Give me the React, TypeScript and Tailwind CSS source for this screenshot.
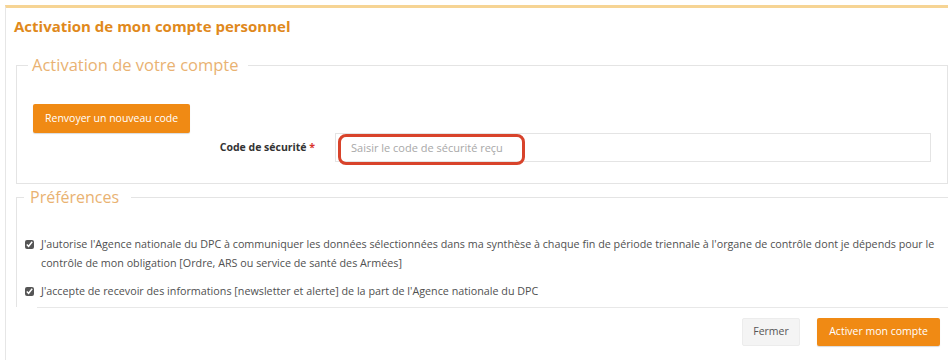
export default function App() {
  return (
    <div className="relative h-[360px] w-[948px] overflow-hidden bg-white pl-[5px] pt-[5px] font-['Open_Sans',sans-serif]">
      <div className="flex h-full flex-col border-l border-t-[3px] border-l-[#e6e6e6] border-t-[#f6d494]">
        <h1 className="pl-[8px] pt-[8px] text-[15px] font-bold leading-[20px] text-[#e0891c]">
          Activation de mon compte personnel
        </h1>

        <fieldset className="ml-[10px] mr-[3px] mt-[19px] h-[129px] border border-[#e4e4e4] px-[16px]">
          <legend className="ml-[-5px] px-[4px] pr-[9px] text-[16.5px] leading-[20px] text-[#e9b272]">
            Activation de votre compte
          </legend>
          <button className="mt-[29px] h-[29px] rounded-[2px] bg-[#f08a14] px-[12px] text-[10.5px] text-white shadow-[0_1px_1px_rgba(0,0,0,0.15)]">
            Renvoyer un nouveau code
          </button>
          <div className="flex items-center">
            <label className="w-[302px] pr-[20px] text-right text-[10.5px] font-bold text-[#333]">
              Code de sécurité <span className="text-[#d9332a]">*</span>
            </label>
            <input
              className="h-[29px] w-[596px] border border-[#e4e4e4] px-[15px] text-[11px] placeholder:text-[#a8a8a8] outline-none"
              placeholder="Saisir le code de sécurité reçu"
            />
          </div>
        </fieldset>

        <fieldset className="ml-[10px] mr-[-2px] mt-[3px] h-[120px] border-l border-t border-[#e4e4e4] px-0">
          <legend className="ml-[7px] px-[6px] pr-[12px] text-[16px] leading-[20px] text-[#e9b272]">
            Préférences
          </legend>
          <div className="mt-[28px] flex flex-col gap-[9px] pl-[8px] pr-[9px] text-[10.75px] leading-[19px] text-[#505050]">
            <label className="flex items-start gap-[7px]">
              <input type="checkbox" defaultChecked className="mt-[5px] h-[9px] w-[9px] shrink-0 accent-[#555]" />
              <span>
                J'autorise l'Agence nationale du DPC à communiquer les données sélectionnées dans ma synthèse à chaque fin de période triennale à l'organe de contrôle dont je dépends pour le contrôle de mon obligation [Ordre, ARS ou service de santé des Armées]
              </span>
            </label>
            <label className="flex items-start gap-[7px]">
              <input type="checkbox" defaultChecked className="mt-[5px] h-[9px] w-[9px] shrink-0 accent-[#555]" />
              <span>J'accepte de recevoir des informations [newsletter et alerte] de la part de l'Agence nationale du DPC</span>
            </label>
          </div>
        </fieldset>

        <div className="ml-[31px] flex justify-end gap-[17px] border-t border-[#e8e8e8] pr-[8px] pt-[10px]">
          <button className="h-[28px] w-[58px] rounded-[2px] border border-[#ececec] bg-[#f4f4f4] text-[10.5px] text-[#555]">
            Fermer
          </button>
          <button className="h-[28px] w-[123px] rounded-[2px] bg-[#f08a14] text-[10.5px] text-white shadow-[0_1px_1px_rgba(0,0,0,0.15)]">
            Activer mon compte
          </button>
        </div>
      </div>

      <div className="pointer-events-none absolute left-[338px] top-[134px] h-[31px] w-[187px] rounded-[8px] border-[3px] border-[#d8432b]" />
    </div>
  );
}
